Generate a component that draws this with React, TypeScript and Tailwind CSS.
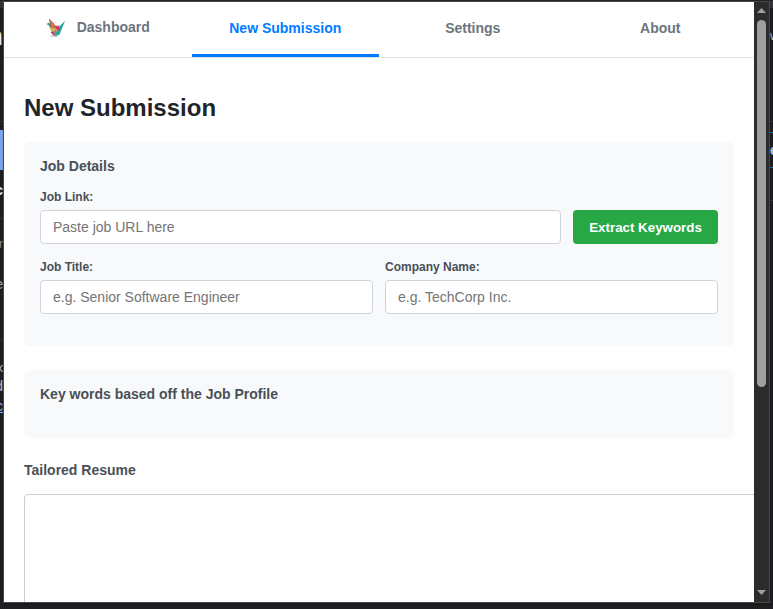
import React from "react";

function Logo() {
  return (
    <svg className="h-5 w-5 shrink-0" viewBox="0 0 20 20" aria-hidden="true">
      <ellipse cx="8" cy="18.2" rx="4" ry="0.9" fill="#c9cdce" />
      <path d="M19 3 14.2 7.4 12.3 10 14.8 12.8 17 8Z" fill="#1fa698" />
      <path d="M.2 6 3 4.8 5 6.5 4.2 9.7 2.6 7.2Z" fill="#3d9c91" />
      <path d="M3.4 1 8 5.2 9.7 8.5 5 10.7 4.3 6Z" fill="#d9783f" />
      <path d="M3.4 1 4.6 6.2 4.2 9.8" fill="none" stroke="#656565" strokeWidth=".8" />
      <path d="M8.2 7.8 13 7.7 14.2 12.4 10 13Z" fill="#c83e68" />
      <path d="M4.2 9.7 8.8 8.5 9.4 13 5.2 14.6Z" fill="#dda849" />
      <path d="M9 9.2 11.6 12.8 8.8 15.8 6 13.4Z" fill="#e8c16c" />
      <path d="M4.8 14 8.4 13.6 9.2 17.8 6.3 16.8Z" fill="#cf4968" />
      <path d="M8.3 14.7 15.4 11.6 13.8 16.6 9 18.2Z" fill="#28a99c" />
      <path d="M4.5 9.8 8.6 8.6 9.4 13.4 5.2 14.6M9.4 13.4 14 12.3" fill="none" stroke="#76504b" strokeWidth=".6" />
    </svg>
  );
}

const fragmentsLeft = [
  { text: "n", style: "top-[20px] h-[30px] text-[25px] leading-[33px] text-[#e5e5e5]" },
  { text: "c", style: "top-[182px] h-4 text-[15px] font-bold leading-4 text-[#e5e5e5]" },
  { text: "r", style: "top-[236px] h-4 text-[12px] leading-4 text-[#888]" },
  { text: "e", style: "top-[276px] h-4 text-[14px] leading-4 text-[#aaa]" },
  { text: "x", style: "top-[360px] h-4 text-[13px] leading-4 text-[#bbb]" },
  { text: "d", style: "top-[378px] h-4 text-[14px] leading-4 text-[#bbb]" },
  { text: "c", style: "top-[398px] h-4 text-[14px] leading-4 text-[#8ab4f8] underline" },
];

function Backdrop() {
  return (
    <>
      <div className="absolute left-0 top-0 h-2 w-full bg-[#343234]" />
      <div className="absolute left-0 top-0 h-px w-full bg-[#242226]" />
      <div className="absolute left-0 top-[121px] h-px w-full bg-[#353538]" />
      <div className="absolute left-0 top-[130px] h-10 w-[3px] bg-[#80a5ef]" />
      <div className="absolute left-0 top-[218px] h-px w-[3px] bg-[#353538]" />
      <div className="absolute left-0 top-[339px] h-px w-[3px] bg-[#353538]" />
      {fragmentsLeft.map((item) => (
        <div key={item.style} className={`absolute left-0 flex w-[3px] justify-end overflow-hidden ${item.style}`}>
          {item.text}
        </div>
      ))}
      <div className="absolute right-0 top-[132px] h-px w-[3px] bg-[#087cab]" />
      <div className="absolute right-0 top-[167px] h-px w-[3px] bg-[#087cab]" />
      <div className="absolute right-0 top-[200px] h-px w-[3px] bg-[#353538]" />
      <div className="absolute right-0 top-[28px] w-[3px] overflow-hidden text-[12px] leading-4 text-[#bbb]">w</div>
      <div className="absolute right-0 top-[142px] w-[3px] overflow-hidden text-[14px] font-bold leading-4 text-[#a8c7fa]">e</div>
    </>
  );
}

function Field({ label, placeholder }: { label: string; placeholder: string }) {
  return (
    <label className="flex min-w-0 flex-1 flex-col">
      <span className="mb-1.5 text-[12px] font-bold leading-[14px] text-[#495057]">{label}</span>
      <input
        className="h-[34px] w-full rounded-[4px] border border-[#ced4da] bg-white px-3 text-[14px] leading-4 outline-none placeholder:text-[#757575]"
        placeholder={placeholder}
      />
    </label>
  );
}

function Scrollbar() {
  return (
    <div className="flex w-[15px] shrink-0 flex-col items-center bg-[#2c2c2c]">
      <svg className="h-[18px] w-[15px] shrink-0" viewBox="0 0 15 18">
        <path d="M3 11 7.5 6 12 11Z" fill="#9f9f9f" />
      </svg>
      <div className="h-[367px] w-[9px] rounded-full bg-[#9f9f9f]" />
      <svg className="mt-auto h-[15px] w-[15px] shrink-0" viewBox="0 0 15 15">
        <path d="M3 3 7.5 8 12 3Z" fill="#9f9f9f" />
      </svg>
    </div>
  );
}

export default function App() {
  return (
    <div className="relative h-[609px] w-[773px] overflow-hidden bg-[#1f1f23] font-['Liberation_Sans',Arial,sans-serif]">
      <Backdrop />
      <div className="absolute left-[3px] top-px flex h-[602px] w-[767px] border border-[#484848] bg-white shadow-[0_2px_3px_-1px_#0006]">
        <main className="flex w-[750px] shrink-0 flex-col overflow-hidden bg-white">
          <nav className="grid h-14 shrink-0 grid-cols-4 border-b border-[#dee2e6] text-[14px] font-bold leading-4 text-[#6c757d]">
            <button className="flex items-center justify-center border-b-[3px] border-transparent">
              <span className="mr-2.5"><Logo /></span>
              <span className="mb-0.5 pl-px">Dashboard</span>
            </button>
            <button className="border-b-[3px] border-[#007bff] text-[#007bff]">New Submission</button>
            <button className="border-b-[3px] border-transparent">Settings</button>
            <button className="border-b-[3px] border-transparent">About</button>
          </nav>
          <div className="flex flex-col px-5 pt-9">
            <h1 className="text-[24px] font-bold leading-7 text-[#212529]">New Submission</h1>
            <section className="mt-5 h-[204px] rounded-[6px] bg-[#f8f9fa] p-4">
              <h2 className="text-[14px] font-bold leading-4 text-[#495057]">Job Details</h2>
              <div className="mt-4 flex items-end gap-3">
                <Field label="Job Link:" placeholder="Paste job URL here" />
                <button className="h-[34px] w-[145px] rounded-[4px] bg-[#28a745] pt-0.5 text-[13.333px] font-bold leading-4 text-white">Extract Keywords</button>
              </div>
              <div className="mt-4 flex gap-3">
                <Field label="Job Title:" placeholder="e.g. Senior Software Engineer" />
                <Field label="Company Name:" placeholder="e.g. TechCorp Inc." />
              </div>
            </section>
            <section className="mt-6 h-[68px] rounded-[6px] bg-[#f8f9fa] p-4">
              <h2 className="text-[14px] font-bold leading-4 text-[#495057]">Key words based off the Job Profile</h2>
            </section>
            <h2 className="mt-6 text-[14px] font-bold leading-4 text-[#495057]">Tailored Resume</h2>
            <textarea className="mt-4 h-[200px] w-[760px] shrink-0 resize-none rounded-[4px] border border-[#cccccc] bg-white p-3 outline-none" />
          </div>
        </main>
        <Scrollbar />
      </div>
    </div>
  );
}
